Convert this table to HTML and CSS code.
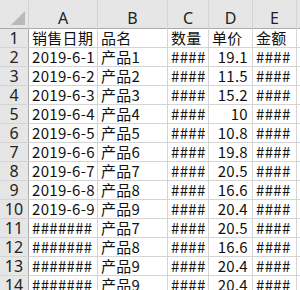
FILE: index.html
```html
<!DOCTYPE html>
<html>
<head>
<meta charset="utf-8">
<link rel="stylesheet" href="styles.css">
</head>
<body>
<div class="sheet">
  <div class="corner"><span class="tri"></span></div>
  <div class="ch">A</div><div class="ch">B</div><div class="ch">C</div><div class="ch">D</div><div class="ch">E</div><div class="ch last"></div>

  <div class="rh">1</div><div class="c">销售日期</div><div class="c">品名</div><div class="c">数量</div><div class="c">单价</div><div class="c">金额</div><div class="c"></div>
  <div class="rh">2</div><div class="c">2019-6-1</div><div class="c">产品1</div><div class="c">####</div><div class="c n">19.1</div><div class="c">####</div><div class="c"></div>
  <div class="rh">3</div><div class="c">2019-6-2</div><div class="c">产品2</div><div class="c">####</div><div class="c n">11.5</div><div class="c">####</div><div class="c"></div>
  <div class="rh">4</div><div class="c">2019-6-3</div><div class="c">产品3</div><div class="c">####</div><div class="c n">15.2</div><div class="c">####</div><div class="c"></div>
  <div class="rh">5</div><div class="c">2019-6-4</div><div class="c">产品4</div><div class="c">####</div><div class="c n">10</div><div class="c">####</div><div class="c"></div>
  <div class="rh">6</div><div class="c">2019-6-5</div><div class="c">产品5</div><div class="c">####</div><div class="c n">10.8</div><div class="c">####</div><div class="c"></div>
  <div class="rh">7</div><div class="c">2019-6-6</div><div class="c">产品6</div><div class="c">####</div><div class="c n">19.8</div><div class="c">####</div><div class="c"></div>
  <div class="rh">8</div><div class="c">2019-6-7</div><div class="c">产品7</div><div class="c">####</div><div class="c n">20.5</div><div class="c">####</div><div class="c"></div>
  <div class="rh">9</div><div class="c">2019-6-8</div><div class="c">产品8</div><div class="c">####</div><div class="c n">16.6</div><div class="c">####</div><div class="c"></div>
  <div class="rh">10</div><div class="c">2019-6-9</div><div class="c">产品9</div><div class="c">####</div><div class="c n">20.4</div><div class="c">####</div><div class="c"></div>
  <div class="rh">11</div><div class="c">#######</div><div class="c">产品7</div><div class="c">####</div><div class="c n">20.5</div><div class="c">####</div><div class="c"></div>
  <div class="rh">12</div><div class="c">#######</div><div class="c">产品8</div><div class="c">####</div><div class="c n">16.6</div><div class="c">####</div><div class="c"></div>
  <div class="rh">13</div><div class="c">#######</div><div class="c">产品9</div><div class="c">####</div><div class="c n">20.4</div><div class="c">####</div><div class="c"></div>
  <div class="rh">14</div><div class="c">#######</div><div class="c">产品9</div><div class="c">####</div><div class="c n">20.4</div><div class="c">####</div><div class="c"></div>
</div>
</body>
</html>
```

FILE: styles.css
```css
html, body {
  margin: 0;
  padding: 0;
  background: #ffffff;
  overflow: hidden;
}
.sheet {
  display: grid;
  grid-template-columns: 28px 68px 69px 40px 43px 43px 1fr;
  grid-template-rows: 28px repeat(14, 18px);
  gap: 1px;
  background: #d4d4d4;
  width: 300px;
  font-family: "Noto Sans CJK SC", "Noto Sans", sans-serif;
  font-size: 15px;
  color: #111;
}
.corner {
  background: #e6e6e6;
  position: relative;
  border-bottom: 1px solid #ababab;
  margin-bottom: -1px;
}
.tri {
  position: absolute;
  right: 3px;
  bottom: 3px;
  width: 0;
  height: 0;
  border-left: 14px solid transparent;
  border-bottom: 14px solid #b9b9b9;
}
.ch {
  background: #e6e6e6;
  color: #222;
  text-align: center;
  box-sizing: border-box;
  padding-top: 8px;
  line-height: 20px;
  border-bottom: 1px solid #ababab;
  margin-bottom: -1px;
  font-family: "Noto Sans", sans-serif;
  font-size: 16px;
}
.rh {
  background: #e6e6e6;
  color: #222;
  text-align: center;
  line-height: 18px;
  border-right: 1px solid #ababab;
  margin-right: -1px;
  font-family: "Noto Sans", sans-serif;
  font-size: 16px;
}
.c {
  background: #ffffff;
  padding-left: 3px;
  line-height: 18px;
  letter-spacing: 0.3px;
  white-space: nowrap;
}
.n {
  text-align: right;
  padding: 0 4px 0 0;
}
```
